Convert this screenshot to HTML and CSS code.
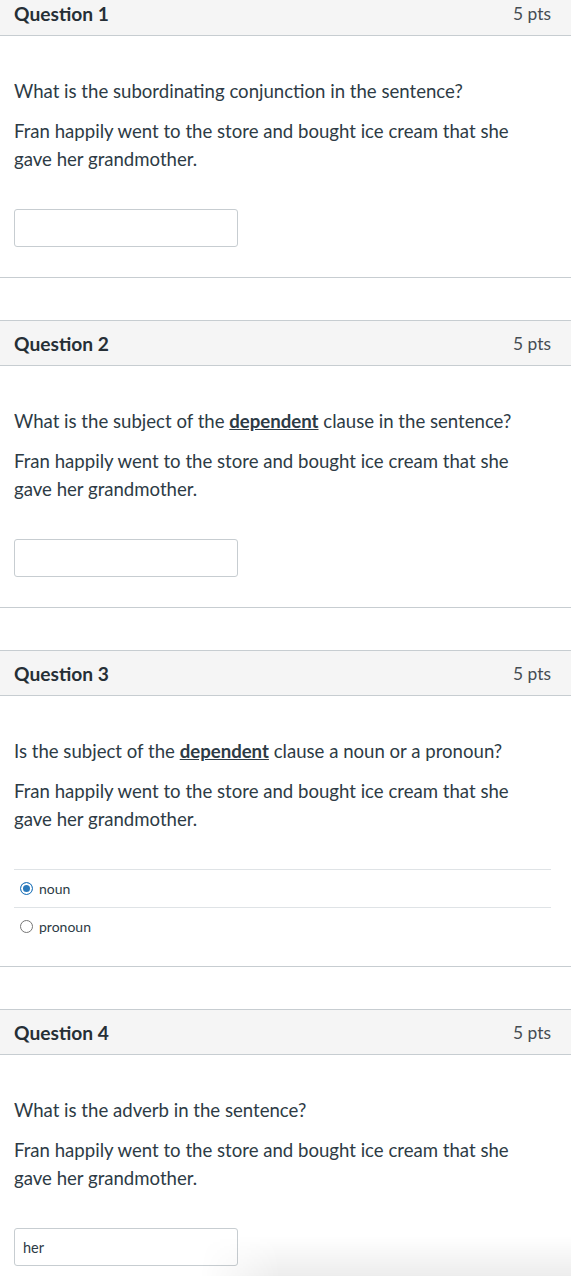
FILE: index.html
```html
<!DOCTYPE html>
<html lang="en">
<head>
    <meta charset="UTF-8">
    <meta name="viewport" content="width=device-width, initial-scale=1.0">
    <title>Quiz</title>
    <link rel="stylesheet" href="styles.css">
</head>
<body>
    <div class="quiz">
        <div class="question">
            <div class="question-header">
                <span class="question-name">Question 1</span>
                <span class="question-pts">5 pts</span>
            </div>
            <div class="question-body">
                <p>What is the subordinating conjunction in the sentence?</p>
                <p>Fran happily went to the store and bought ice cream that she gave her grandmother.</p>
                <input type="text" class="answer-input">
            </div>
        </div>

        <div class="question">
            <div class="question-header">
                <span class="question-name">Question 2</span>
                <span class="question-pts">5 pts</span>
            </div>
            <div class="question-body">
                <p>What is the subject of the <strong><u>dependent</u></strong> clause in the sentence?</p>
                <p>Fran happily went to the store and bought ice cream that she gave her grandmother.</p>
                <input type="text" class="answer-input">
            </div>
        </div>

        <div class="question">
            <div class="question-header">
                <span class="question-name">Question 3</span>
                <span class="question-pts">5 pts</span>
            </div>
            <div class="question-body">
                <p>Is the subject of the <strong><u>dependent</u></strong> clause a noun or a pronoun?</p>
                <p>Fran happily went to the store and bought ice cream that she gave her grandmother.</p>
                <div class="answers">
                    <label class="answer">
                        <span class="radio checked"></span>
                        noun
                    </label>
                    <label class="answer">
                        <span class="radio"></span>
                        pronoun
                    </label>
                </div>
            </div>
        </div>

        <div class="question">
            <div class="question-header">
                <span class="question-name">Question 4</span>
                <span class="question-pts">5 pts</span>
            </div>
            <div class="question-body">
                <p>What is the adverb in the sentence?</p>
                <p>Fran happily went to the store and bought ice cream that she gave her grandmother.</p>
                <input type="text" class="answer-input" value="her">
            </div>
        </div>
    </div>
    <div class="bottom-fade"></div>
</body>
</html>
```

FILE: styles.css
```css
body {
    margin: 0;
    font-family: Lato, 'Open Sans', sans-serif;
    color: #2d3b45;
    background: #fff;
}
.quiz {
    margin-top: -10px;
}
.question {
    margin-bottom: 42px;
}
.question-header {
    display: flex;
    justify-content: space-between;
    align-items: center;
    height: 44px;
    padding: 0 20px 0 14px;
    background-color: #f5f5f5;
    border-top: 1px solid #c7cdd1;
    border-bottom: 1px solid #c7cdd1;
}
.question-name {
    font-size: 19.2px;
    font-weight: 700;
    color: #262f36;
}
.question-pts {
    font-size: 17.4px;
    color: #454c52;
}
.question-body {
    padding: 41px 20px 30px 14px;
    border-bottom: 1px solid #c7cdd1;
}
.question-body p {
    margin: 0 0 12px;
    font-size: 18.6px;
    line-height: 28px;
    padding-right: 30px;
}
.question-body p + p {
    margin-bottom: 36px;
}
.answer-input {
    display: block;
    box-sizing: border-box;
    width: 224px;
    height: 38px;
    margin: 0;
    padding: 0 8px;
    border: 1px solid #c7cdd1;
    border-radius: 3px;
    font-family: Lato, sans-serif;
    font-size: 14.5px;
    color: #2d3b45;
}
.answers {
    margin-bottom: -9px;
}
.answer {
    display: flex;
    align-items: center;
    gap: 6px;
    height: 37px;
    padding-left: 6px;
    border-top: 1px solid #dfe3e6;
    font-size: 14px;
    color: #2d3b45;
}
.radio {
    box-sizing: border-box;
    width: 13px;
    height: 13px;
    border-radius: 50%;
    border: 1px solid #767676;
    background: #fff;
}
.radio.checked {
    border: 1px solid #2b7abc;
    background: #2b7abc;
    box-shadow: inset 0 0 0 2px #fff;
}
.bottom-fade {
    position: fixed;
    left: 200px;
    right: 0;
    bottom: 0;
    height: 40px;
    background: linear-gradient(to bottom, rgba(0, 0, 0, 0), rgba(0, 0, 0, 0.07));
    -webkit-mask-image: linear-gradient(to right, transparent, black 80px);
    mask-image: linear-gradient(to right, transparent, black 80px);
    pointer-events: none;
}
```
